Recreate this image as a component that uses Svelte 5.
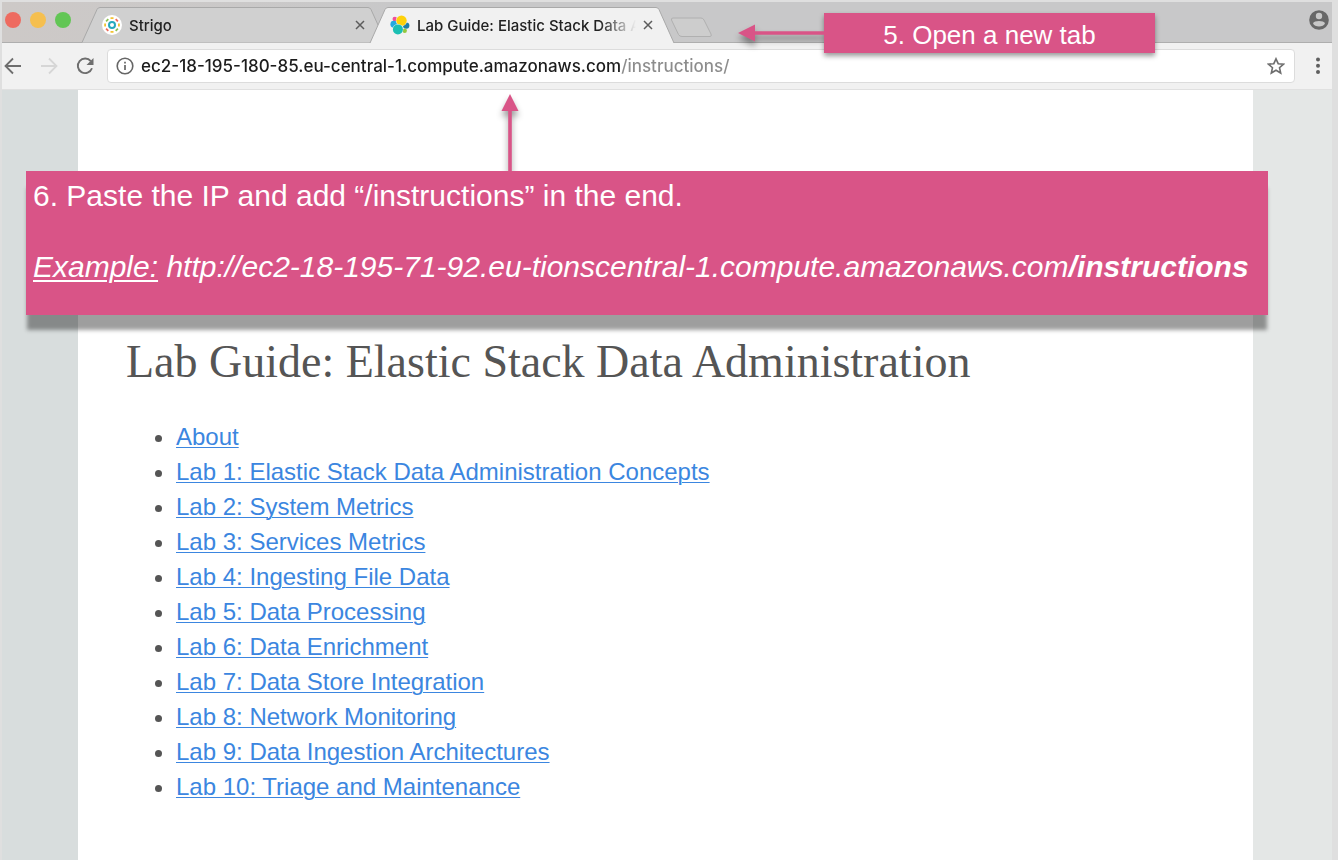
<script>
  const addressFont = '500 17px Inter, sans-serif';
  const pen = document.createElement('canvas').getContext('2d');

  let address = $state('ec2-18-195-180-85.eu-central-1.compute.amazonaws.com/instructions/');

  // The host part of the address is dark and the path after it is grey.
  const hostWidth = $derived.by(() => {
    pen.font = addressFont;
    return Math.round(pen.measureText(address.split('/')[0]).width);
  });

  const labs = [
    'About',
    'Lab 1: Elastic Stack Data Administration Concepts',
    'Lab 2: System Metrics',
    'Lab 3: Services Metrics',
    'Lab 4: Ingesting File Data',
    'Lab 5: Data Processing',
    'Lab 6: Data Enrichment',
    'Lab 7: Data Store Integration',
    'Lab 8: Network Monitoring',
    'Lab 9: Data Ingestion Architectures',
    'Lab 10: Triage and Maintenance'
  ];
</script>

{#snippet closeIcon()}
  <svg width="10" height="10" viewBox="0 0 10 10" aria-hidden="true">
    <path d="M1 1 9 9M9 1 1 9" fill="none" stroke="#5c5c5c" stroke-width="1.5" />
  </svg>
{/snippet}

<div class="window">
  <header class="strip">
    <div class="lights">
      <button class="light red" aria-label="Close window"></button>
      <button class="light amber" aria-label="Minimise window"></button>
      <button class="light green" aria-label="Zoom window"></button>
    </div>

    <div class="tab">
      <svg class="shape" viewBox="0 0 304 36" preserveAspectRatio="none" aria-hidden="true">
        <path d="M0 35.5 15 2.5Q16 .5 18 .5H286Q288 .5 289 2.5L304 35.5" fill="#d0d0d0" stroke="#a9a9a9" />
      </svg>
      <svg class="favicon" width="20" height="20" viewBox="0 0 20 20" aria-hidden="true">
        <circle cx="10" cy="10" r="10" fill="#fff" />
        <circle cx="10" cy="10" r="3" fill="none" stroke="#27a9bd" stroke-width="2" />
        <g fill="none" stroke-width="1.8">
          <path d="M8.500 3.100h3M3.100 11.500V8.500M16.900 8.500v3M8.500 16.900h3" stroke="#f2c230" />
          <path d="M4.100 13.700l2.200 2.200M13.700 4.100l2.200 2.200" stroke="#ef6a5a" />
          <path d="M4.100 6.300 6.300 4.100M13.700 15.900l2.200-2.200" stroke="#8cc152" />
        </g>
      </svg>
      <span class="title">Strigo</span>
      <button class="close" aria-label="Close Strigo tab">{@render closeIcon()}</button>
    </div>

    <div class="tab active">
      <svg class="shape" viewBox="0 0 304 36" preserveAspectRatio="none" aria-hidden="true">
        <path d="M0 36 15 2.5Q16 .5 18 .5H286Q288 .5 289 2.5L304 36" fill="#f1f1f1" stroke="#a9a9a9" />
      </svg>
      <svg class="favicon" width="20" height="20" viewBox="0 0 20 20" aria-hidden="true">
        <circle cx="4.800" cy="4" r="2.300" fill="#f04e98" />
        <circle cx="3.800" cy="9.200" r="3.400" fill="#24a9e0" />
        <circle cx="16.200" cy="10.600" r="3.200" fill="#1e7ea8" />
        <circle cx="14.700" cy="15.700" r="2.200" fill="#93c83e" />
        <circle cx="11.500" cy="5.600" r="5.600" fill="#f1f1f1" />
        <circle cx="11.500" cy="5.600" r="5.200" fill="#fed10a" />
        <circle cx="7.900" cy="14.400" r="5.400" fill="#f1f1f1" />
        <circle cx="7.900" cy="14.400" r="5" fill="#1bbfb3" />
      </svg>
      <span class="title">Lab Guide: Elastic Stack Data Administration</span>
      <button class="close" aria-label="Close Lab Guide tab">{@render closeIcon()}</button>
    </div>

    <button class="new-tab" aria-label="New tab">
      <svg width="43" height="21" viewBox="0 0 43 21" aria-hidden="true">
        <path d="M3 1H31Q33 1 34 3L41 17Q42 19.500 40 19.500H12Q9.500 19.500 8.500 17.500L1.500 3Q1 1 3 1Z" fill="#cdcdcd" stroke="#b0b0b0" />
      </svg>
    </button>

    <button class="profile" aria-label="Profile">
      <svg width="20" height="20" viewBox="0 0 20 20" aria-hidden="true">
        <circle cx="10" cy="10" r="9.800" fill="#686868" />
        <circle cx="10" cy="6" r="3.200" fill="#c8c8c8" />
        <path d="M4 13.200C5.200 10.400 14.800 10.400 16 13.200C14.500 17.600 5.500 17.600 4 13.200Z" fill="#c8c8c8" />
      </svg>
    </button>
  </header>

  <nav class="toolbar" aria-label="Browser">
    <button aria-label="Back">
      <svg width="18" height="18" viewBox="0 0 18 18" aria-hidden="true">
        <path d="M17 9H2M9 1.500 1.500 9 9 16.500" fill="none" stroke="#6e6e6e" stroke-width="1.800" />
      </svg>
    </button>
    <button aria-label="Forward" disabled>
      <svg width="18" height="18" viewBox="0 0 18 18" aria-hidden="true">
        <path d="M1 9H16M9 1.500 16.500 9 9 16.500" fill="none" stroke="#d6d6d6" stroke-width="1.800" />
      </svg>
    </button>
    <button aria-label="Reload">
      <svg width="18" height="18" viewBox="0 0 18 18" aria-hidden="true">
        <path d="M14.800 4.200A7.300 7.300 0 1 0 16 11.300" fill="none" stroke="#6e6e6e" stroke-width="1.900" />
        <path d="M17.500 1V8H10.500Z" fill="#6e6e6e" />
      </svg>
    </button>
    <div class="omnibox">
      <svg width="18" height="18" viewBox="0 0 18 18" aria-hidden="true">
        <circle cx="9" cy="9" r="7.800" fill="none" stroke="#666" stroke-width="1.600" />
        <path d="M9 8V13M9 4.800V6.500" stroke="#666" stroke-width="1.700" />
      </svg>
      <input
        type="text"
        aria-label="Address"
        bind:value={address}
        spellcheck="false"
        style:font={addressFont}
        style:--host="{hostWidth}px"
      />
      <button aria-label="Bookmark this page">
        <svg width="18" height="18" viewBox="0 0 18 18" aria-hidden="true">
          <path d="M9 1.800 11.200 6.700 16.500 7.200 12.500 10.700 13.700 16 9 13.200 4.300 16 5.500 10.700 1.500 7.200 6.800 6.700Z" fill="none" stroke="#6e6e6e" stroke-width="1.600" />
        </svg>
      </button>
    </div>
    <button class="menu" aria-label="Menu">
      <svg width="6" height="18" viewBox="0 0 6 18" aria-hidden="true">
        <g fill="#5f5f5f">
          <circle cx="3" cy="2.500" r="2" />
          <circle cx="3" cy="8.800" r="2" />
          <circle cx="3" cy="15.100" r="2" />
        </g>
      </svg>
    </button>
  </nav>

  <div class="viewport">
    <main>
      <h1>Lab Guide: Elastic Stack Data Administration</h1>
      <ul>
        {#each labs as lab}
          <li><a href="#top">{lab}</a></li>
        {/each}
      </ul>
    </main>
  </div>
</div>

<aside class="step step-tab">
  <svg width="86" height="22" viewBox="0 0 86 22" aria-hidden="true">
    <path d="M0 9 17 .5V7.200H86V10.800H17V17.500Z" fill="#d95487" />
  </svg>
  <p>5. Open a new tab</p>
</aside>

<aside class="step step-url">
  <svg width="18" height="77" viewBox="0 0 18 77" aria-hidden="true">
    <path d="M9 0 17.500 17H10.800V77H7.200V17H.5Z" fill="#d95487" />
  </svg>
  <p>6. Paste the IP and add “/instructions” in the end.</p>
  <p class="example"><u>Example:</u> http://ec2-18-195-71-92.eu-tionscentral-1.compute.amazonaws.com<b>/instructions</b></p>
</aside>

<style>
  :global(body) {
    margin: 0;
    background: #dfdfdf;
    overflow-x: hidden;
  }

  button {
    display: flex;
    flex: none;
    align-items: center;
    justify-content: center;
    padding: 0;
    border: 0;
    background: none;
  }

  .window {
    display: flex;
    flex-direction: column;
    box-sizing: border-box;
    min-height: 100vh;
    padding: 2px 6px 0 2px;
    font-family: Inter, sans-serif;
  }

  .strip {
    display: flex;
    align-items: flex-end;
    box-sizing: border-box;
    height: 41px;
    padding: 0 3px;
    background: linear-gradient(90deg, #cdc9c7, #c8c8c9 30%);
    box-shadow: inset 0 -1px #aeaeae;
  }

  .lights {
    display: flex;
    gap: 9px;
    align-self: flex-start;
    width: 77px;
    padding-top: 10px;
  }

  .light {
    width: 16px;
    height: 16px;
    border-radius: 50%;
  }

  .red { background: #ee6b60; }
  .amber { background: #f5bf4f; }
  .green { background: #62c655; }

  .tab {
    position: relative;
    display: flex;
    align-items: center;
    box-sizing: border-box;
    width: 304px;
    height: 36px;
    padding: 0 16px 0 20px;
    font-size: 15px;
    font-weight: 500;
    color: #222;
  }

  .active {
    margin-left: -16px;
  }

  .shape {
    position: absolute;
    inset: 0;
    width: 100%;
    height: 100%;
    overflow: visible;
  }

  .favicon, .title, .close {
    position: relative;
    flex: none;
  }

  .title {
    flex: 1;
    min-width: 0;
    margin: 0 2px 0 7px;
    overflow: hidden;
    white-space: nowrap;
    mask-image: linear-gradient(90deg, #000 calc(100% - 36px), transparent);
  }

  .close {
    width: 20px;
    height: 20px;
  }

  .new-tab {
    margin: 0 auto 5px -4px;
  }

  .profile {
    align-self: flex-start;
    padding-top: 8px;
  }

  .toolbar {
    display: flex;
    align-items: center;
    gap: 18px;
    box-sizing: border-box;
    height: 47px;
    padding: 0 11px 0 2px;
    border-bottom: 1px solid #e0e0e0;
    background: #f1f1f1;
  }

  .omnibox {
    display: flex;
    flex: 1;
    align-items: center;
    gap: 7px;
    box-sizing: border-box;
    height: 34px;
    margin-left: -5px;
    padding: 0 9px 0 8px;
    border: 1px solid #dcdcdc;
    border-radius: 4px;
    background: #fff;
  }

  input {
    flex: 1;
    min-width: 0;
    height: 28px;
    padding: 0;
    border: 0;
    outline: 0;
    background: linear-gradient(90deg, #1c1c1c var(--host), #8c8c8c var(--host));
    background-clip: text;
    -webkit-text-fill-color: transparent;
  }

  .menu {
    margin-left: 2px;
  }

  .viewport {
    flex: 1;
    padding: 0 79px 0 76px;
    background: linear-gradient(90deg, #d8dddd 50%, #e4e7e6 50%);
  }

  main {
    box-sizing: border-box;
    height: 100%;
    padding: 246px 48px 56px;
    background: #fff;
    color: #555;
  }

  h1 {
    margin: 0;
    font: 46px/52px "Liberation Serif", serif;
  }

  ul {
    margin: 31px 0 0;
    padding-left: 50px;
    font: 24px/35px "Liberation Sans", sans-serif;
  }

  a {
    color: #3b86e0;
    text-decoration-thickness: 1px;
    text-underline-offset: 2px;
  }

  .step {
    position: absolute;
    box-sizing: border-box;
    background: #d95487;
    color: #fff;
    font-family: "Liberation Sans", sans-serif;
    white-space: nowrap;
  }

  .step p {
    margin: 0;
  }

  .step svg {
    position: absolute;
    filter: drop-shadow(0 5px 3px rgb(0 0 0 / 40%));
  }

  .step-tab {
    top: 13px;
    right: 183px;
    width: 331px;
    padding-top: 4px;
    box-shadow: 0 3px 5px rgb(0 0 0 / 40%);
    font-size: 26px;
    line-height: 36px;
    text-align: center;
  }

  .step-tab svg {
    top: 11px;
    right: 100%;
    clip-path: inset(-6px 0 -12px -6px);
  }

  .step-url {
    top: 171px;
    right: 70px;
    left: 26px;
    padding: 7px 7px 30px;
    box-shadow: 0 16px 4px -1px rgb(0 0 0 / 38%);
    font-size: 30px;
    line-height: 36px;
  }

  .step-url svg {
    bottom: 100%;
    left: 475px;
    clip-path: inset(-6px -6px 0);
  }

  .step-url .example {
    margin-top: 35px;
    font-style: italic;
  }

  u {
    text-decoration-thickness: 2px;
    text-underline-offset: 3px;
  }
</style>
